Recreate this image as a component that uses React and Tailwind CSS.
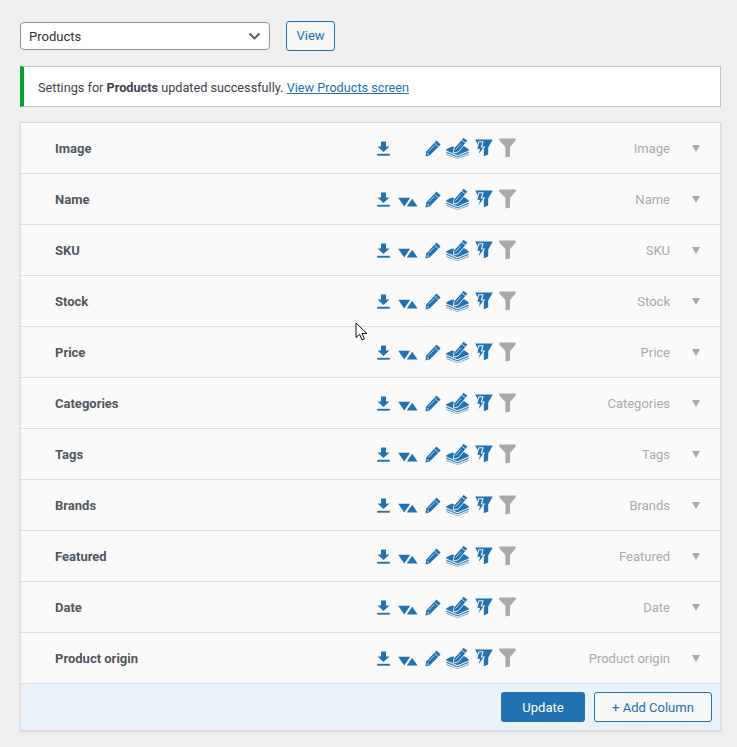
const rows = [
  ["Image", false],
  ["Name", true],
  ["SKU", true],
  ["Stock", true],
  ["Price", true],
  ["Categories", true],
  ["Tags", true],
  ["Brands", true],
  ["Featured", true],
  ["Date", true],
  ["Product origin", true],
];

const BLUE = "#2271b1";

function Download() {
  return (
    <svg width="13" height="15" viewBox="0 0 13 15" className="shrink-0">
      <path d="M4 0.5h5v5h3.5L6.5 11 0.5 5.5H4z" fill={BLUE} />
      <rect x="0.2" y="12.8" width="12.6" height="1.9" fill={BLUE} />
    </svg>
  );
}

function Sort() {
  return (
    <svg width="20" height="10" viewBox="0 0 20 10" className="shrink-0">
      <path d="M0.2 0.8h12L6.2 9.4z" fill={BLUE} />
      <path d="M8.8 9.4l5.4-7.6 5.4 7.6z" fill={BLUE} />
    </svg>
  );
}

function Pencil() {
  return (
    <svg width="16" height="17" viewBox="0 0 16 17" className="shrink-0">
      <path d="M11.5 0.6L15.6 4.6 4.9 15.2 0.5 16.6 1.3 11.6z" fill={BLUE} />
      <path d="M9.4 2.8L13.4 6.8" stroke="#fafafa" strokeWidth="0.8" />
      <path d="M3.4 11.5L9.6 5.3" stroke="#b9d3e8" strokeWidth="0.9" />
      <path d="M2.6 12.8L2.2 14.8 4.2 14.2z" fill="#d5e4f0" />
    </svg>
  );
}

function Stack() {
  return (
    <svg width="23" height="22" viewBox="0 0 23 22" className="shrink-0">
      <path d="M0.3 14.6L11.5 19.2 22.7 14.6V16L11.5 20.6 0.3 16z" fill={BLUE} opacity="0.85" />
      <path d="M0.3 17L11.5 21.4 22.7 17V18L11.5 22 0.3 18z" fill={BLUE} opacity="0.7" />
      <path d="M0.3 12.2L6 9.4 11.5 11 17 8.5 22.7 12.2V13.6L11.5 18.2 0.3 13.6z" fill={BLUE} />
      <path d="M17.6 0.4L21.8 3.6 12.2 15 7.4 16 8 11.2z" fill={BLUE} stroke="#fafafa" strokeWidth="0.9" strokeLinejoin="round" />
      <path d="M15.4 2.8L19.4 6" stroke="#fafafa" strokeWidth="0.8" />
      <path d="M9.6 12.6L15 6.6" stroke="#b9d3e8" strokeWidth="0.9" />
    </svg>
  );
}

function FlashFilter() {
  return (
    <svg width="18" height="18" viewBox="0 0 18 18" className="shrink-0">
      <path d="M0.2 0.4H17.8L13.2 8.4V15.6L8.8 17.2V9.4L3 6z" fill={BLUE} />
      <path d="M3.8 2.8L1.6 10.4H4.4L2.6 17.6 9.4 8H6.4L8 2.8z" fill={BLUE} stroke="#f2f6fa" strokeWidth="1.1" strokeLinejoin="round" />
    </svg>
  );
}

function Funnel() {
  return (
    <svg width="17" height="20" viewBox="0 0 17 20" className="shrink-0">
      <path d="M0.3 0.6H16.7V2.4L11 9V18.6L6.4 19.6V9L0.3 2.4z" fill="#a7aaad" />
    </svg>
  );
}

function Row({ name, sort }) {
  return (
    <div className="flex h-[51px] items-center border-b border-[#dcdcde] bg-[#fafafa]">
      <div className="w-[356px] shrink-0 pl-[34px] pt-[2px] text-[13px] font-bold text-[#50575e]">{name}</div>
      <div className="flex w-[150px] shrink-0 items-center">
        <div className="flex w-[21px] shrink-0"><Download /></div>
        <div className="flex h-[10px] w-[27px] shrink-0 translate-y-[3px] items-center">{sort && <Sort />}</div>
        <div className="flex w-[21px] shrink-0"><Pencil /></div>
        <div className="flex w-[29px] shrink-0"><Stack /></div>
        <div className="flex w-[24px] shrink-0"><FlashFilter /></div>
        <div className="flex w-[20px] shrink-0"><Funnel /></div>
      </div>
      <div className="flex-1 pt-[2px] text-right text-[13px] text-[#a7aaad]">{name}</div>
      <div className="ml-[22px] mr-[20px] h-0 w-0 border-x-[4.5px] border-t-[7px] border-x-transparent border-t-[#a7aaad]" />
    </div>
  );
}

export default function App() {
  return (
    <div
      className="relative h-[747px] w-[737px] overflow-hidden bg-[#f0f0f1] pl-[20px] pr-[16px] pt-[21px] text-[13px] text-[#3c434a]"
      style={{ fontFamily: 'Roboto, "Noto Sans", sans-serif' }}
    >
      <div className="flex items-center gap-[16px]">
        <div className="flex h-[28px] w-[250px] items-center justify-between rounded-[4px] border border-[#8c8f94] bg-white pl-[8px] pr-[8px]">
          <span className="translate-y-[1px] text-[13px] text-[#2c3338]">Products</span>
          <svg width="13" height="8" viewBox="0 0 13 8">
            <path d="M1.5 1.5L6.5 6.5 11.5 1.5" stroke="#50575e" strokeWidth="1.8" fill="none" />
          </svg>
        </div>
        <div className="flex h-[30px] w-[49px] items-center justify-center rounded-[3px] border border-[#2271b1] bg-[#f6f7f7] text-[13px] text-[#2271b1]">
          View
        </div>
      </div>

      <div className="mt-[15px] flex h-[41px] items-center border border-l-[4px] border-[#c3c4c7] border-l-[#00a32a] bg-white pl-[14px] pt-[2px] text-[12.7px]">
        <span>
          Settings for <b className="font-bold">Products</b> updated successfully.{" "}
          <span className="text-[#2271b1] underline">View Products screen</span>
        </span>
      </div>

      <div className="mt-[15px] border border-[#dcdcde] shadow-[0_1px_2px_rgba(0,0,0,0.12)]">
        {rows.map(([name, sort]) => (
          <Row key={name} name={name} sort={sort} />
        ))}
        <div className="flex h-[46px] items-center justify-end gap-[9px] bg-[#e9f2f9] pr-[8px]">
          <div className="flex h-[30px] w-[84px] items-center justify-center rounded-[3px] bg-[#2271b1] pt-[2px] text-white">
            Update
          </div>
          <div className="flex h-[30px] w-[118px] items-center justify-center rounded-[3px] border border-[#2271b1] bg-[#f6f7f7] pt-[2px] text-[#2271b1]">
            + Add Column
          </div>
        </div>
      </div>

      <svg width="13" height="20" viewBox="0 0 13 20" className="absolute left-[355px] top-[322px]">
        <path d="M1 1v14.5l3.6-3.2 2.4 5.6 2.4-1-2.4-5.4h4.9z" fill="#fff" stroke="#111" strokeWidth="1" strokeLinejoin="round" />
      </svg>
    </div>
  );
}
